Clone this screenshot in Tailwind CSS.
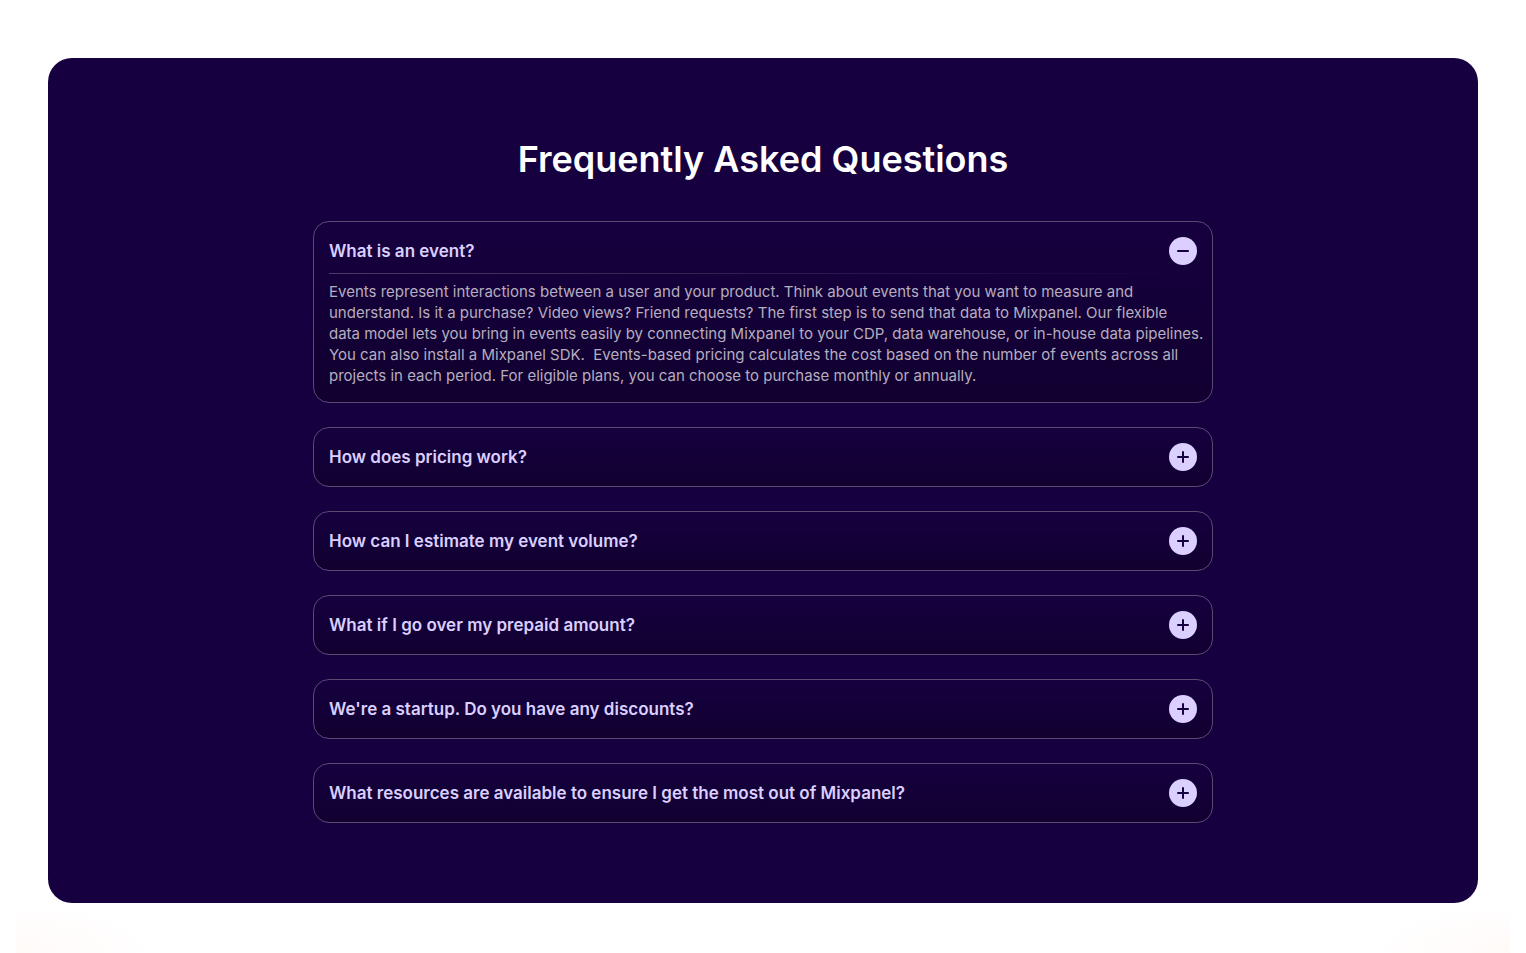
<!DOCTYPE html>
<html lang="en">
<head>
    <meta charset="UTF-8">
    <meta name="viewport" content="width=device-width, initial-scale=1.0">
    <title>Frequently Asked Questions</title>

    <!-- Tailwind CSS -->
    <script src="https://cdn.jsdelivr.net/npm/@tailwindcss/browser@4"></script>
</head>
<body class="bg-white font-['Inter','Liberation_Sans',sans-serif]">
    <!-- Page wrapper, faint warm glow in the bottom corners -->
    <div class="mx-4 min-h-screen px-4 md:px-8 pt-[58px] pb-[50px] bg-[radial-gradient(140px_50px_at_bottom_left,#fffaf8,transparent),radial-gradient(140px_50px_at_bottom_right,#fffaf8,transparent)]">

        <!-- FAQ Section -->
        <section class="rounded-3xl bg-[#16003f] px-4 py-20">
            <h2 class="mb-10 text-center text-4xl leading-[43px] font-semibold text-white">Frequently Asked Questions</h2>

            <div id="faq" class="mx-auto flex max-w-[900px] flex-col gap-6">
                <div class="rounded-2xl border border-[#5a4a72] bg-linear-to-b from-[#16003f] to-[#110030] p-[15px]">
                    <button type="button" aria-expanded="true" aria-controls="answer-1" class="flex w-full cursor-pointer items-center justify-between gap-4 text-left text-[17px] leading-6 font-semibold text-[#dacfff]">
                        <span>What is an event?</span>
                        <svg class="size-7 shrink-0" viewBox="0 0 28 28" fill="none" stroke="#16003f" stroke-width="2" stroke-linecap="round" aria-hidden="true">
                            <circle cx="14" cy="14" r="14" fill="#dacfff" stroke="none"></circle>
                            <path d="M9 14h10"></path>
                            <path class="vertical hidden" d="M14 9v10"></path>
                        </svg>
                    </button>
                    <div id="answer-1">
                        <div class="mt-2 mb-[7px] h-px bg-linear-to-r from-[#4b3a63] to-transparent"></div>
                        <p class="-mr-3 pb-px text-[15px] leading-[21px] text-[#b5aebf]">
                            Events represent interactions between a user and your product. Think about events that you want to measure and
                            <br class="hidden lg:block">
                            understand. Is it a purchase? Video views? Friend requests? The first step is to send that data to Mixpanel. Our flexible
                            <br class="hidden lg:block">
                            data model lets you bring in events easily by connecting Mixpanel to your CDP, data warehouse, or in-house data pipelines.
                            <br class="hidden lg:block">
                            You can also install a Mixpanel SDK. &nbsp;Events-based pricing calculates the cost based on the number of events across all
                            <br class="hidden lg:block">
                            projects in each period. For eligible plans, you can choose to purchase monthly or annually.
                        </p>
                    </div>
                </div>

                <div class="rounded-2xl border border-[#5a4a72] bg-linear-to-b from-[#16003f] to-[#110030] p-[15px]">
                    <button type="button" aria-expanded="false" class="flex w-full cursor-pointer items-center justify-between gap-4 text-left text-[17px] leading-6 font-semibold text-[#dacfff]">
                        <span>How does pricing work?</span>
                        <svg class="size-7 shrink-0" viewBox="0 0 28 28" fill="none" stroke="#16003f" stroke-width="2" stroke-linecap="round" aria-hidden="true">
                            <circle cx="14" cy="14" r="14" fill="#dacfff" stroke="none"></circle>
                            <path d="M9 14h10"></path>
                            <path class="vertical" d="M14 9v10"></path>
                        </svg>
                    </button>
                </div>

                <div class="rounded-2xl border border-[#5a4a72] bg-linear-to-b from-[#16003f] to-[#110030] p-[15px]">
                    <button type="button" aria-expanded="false" class="flex w-full cursor-pointer items-center justify-between gap-4 text-left text-[17px] leading-6 font-semibold text-[#dacfff]">
                        <span>How can I estimate my event volume?</span>
                        <svg class="size-7 shrink-0" viewBox="0 0 28 28" fill="none" stroke="#16003f" stroke-width="2" stroke-linecap="round" aria-hidden="true">
                            <circle cx="14" cy="14" r="14" fill="#dacfff" stroke="none"></circle>
                            <path d="M9 14h10"></path>
                            <path class="vertical" d="M14 9v10"></path>
                        </svg>
                    </button>
                </div>

                <div class="rounded-2xl border border-[#5a4a72] bg-linear-to-b from-[#16003f] to-[#110030] p-[15px]">
                    <button type="button" aria-expanded="false" class="flex w-full cursor-pointer items-center justify-between gap-4 text-left text-[17px] leading-6 font-semibold text-[#dacfff]">
                        <span>What if I go over my prepaid amount?</span>
                        <svg class="size-7 shrink-0" viewBox="0 0 28 28" fill="none" stroke="#16003f" stroke-width="2" stroke-linecap="round" aria-hidden="true">
                            <circle cx="14" cy="14" r="14" fill="#dacfff" stroke="none"></circle>
                            <path d="M9 14h10"></path>
                            <path class="vertical" d="M14 9v10"></path>
                        </svg>
                    </button>
                </div>

                <div class="rounded-2xl border border-[#5a4a72] bg-linear-to-b from-[#16003f] to-[#110030] p-[15px]">
                    <button type="button" aria-expanded="false" class="flex w-full cursor-pointer items-center justify-between gap-4 text-left text-[17px] leading-6 font-semibold text-[#dacfff]">
                        <span>We're a startup. Do you have any discounts?</span>
                        <svg class="size-7 shrink-0" viewBox="0 0 28 28" fill="none" stroke="#16003f" stroke-width="2" stroke-linecap="round" aria-hidden="true">
                            <circle cx="14" cy="14" r="14" fill="#dacfff" stroke="none"></circle>
                            <path d="M9 14h10"></path>
                            <path class="vertical" d="M14 9v10"></path>
                        </svg>
                    </button>
                </div>

                <div class="rounded-2xl border border-[#5a4a72] bg-linear-to-b from-[#16003f] to-[#110030] p-[15px]">
                    <button type="button" aria-expanded="false" class="flex w-full cursor-pointer items-center justify-between gap-4 text-left text-[17px] leading-6 font-semibold text-[#dacfff]">
                        <span>What resources are available to ensure I get the most out of Mixpanel?</span>
                        <svg class="size-7 shrink-0" viewBox="0 0 28 28" fill="none" stroke="#16003f" stroke-width="2" stroke-linecap="round" aria-hidden="true">
                            <circle cx="14" cy="14" r="14" fill="#dacfff" stroke="none"></circle>
                            <path d="M9 14h10"></path>
                            <path class="vertical" d="M14 9v10"></path>
                        </svg>
                    </button>
                </div>
            </div>
        </section>
    </div>

    <script>
        // Open and close the answers
        document.querySelectorAll("#faq button").forEach((button) => {
            button.addEventListener("click", () => {
                const open = button.getAttribute("aria-expanded") === "true";
                button.setAttribute("aria-expanded", String(!open));
                button.querySelector(".vertical").classList.toggle("hidden", !open);
                const answer = button.nextElementSibling;
                if (answer) {
                    answer.classList.toggle("hidden", open);
                }
            });
        });
    </script>
</body>
</html>
